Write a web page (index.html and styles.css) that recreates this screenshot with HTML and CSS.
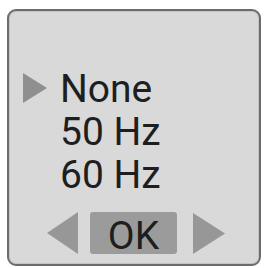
FILE: index.html
```html
<!DOCTYPE html>
<html>
<head>
    <title>Filter</title>
    <link rel="stylesheet" href="styles.css">
</head>
<body>
    <div class="panel">
        <ul class="options">
            <li class="option selected">
                <span class="marker">
                    <svg width="24" height="30" viewBox="0 0 24 30"><polygon points="0,0 24,15 0,30" /></svg>
                </span>
                <span class="label">None</span>
            </li>
            <li class="option">
                <span class="marker"></span>
                <span class="label">50 Hz</span>
            </li>
            <li class="option">
                <span class="marker"></span>
                <span class="label">60 Hz</span>
            </li>
        </ul>
        <div class="nav">
            <svg class="arrow" width="31" height="42" viewBox="0 0 31 42"><polygon points="31,0 31,42 0,21" /></svg>
            <div class="ok">OK</div>
            <svg class="arrow" width="32" height="41" viewBox="0 0 32 41"><polygon points="0,0 32,20.5 0,41" /></svg>
        </div>
    </div>
</body>
</html>
```

FILE: styles.css
```css
body
{
    margin: 0;
    background-color: white;
    font-family: Roboto, "Liberation Sans", sans-serif;
}
.panel
{
    margin-left: 7px;
    margin-top: 9px;
    width: 250px;
    height: 253px;
    border: 2px solid #6c6c6c;
    border-radius: 9px;
    background-color: #d9d9d9;
    box-shadow: inset 0 0 0 1px #c4c4c4;
}
.options
{
    list-style: none;
    margin: 0;
    padding: 57px 0 0 14px;
}
.option
{
    display: flex;
    align-items: center;
    gap: 13px;
    height: 43px;
    font-size: 39px;
    line-height: 43px;
    color: #1e1e1e;
}
.marker
{
    width: 24px;
    height: 30px;
    margin-top: -4px;
}
.marker svg
{
    display: block;
    fill: #8f8f8f;
}
.nav
{
    display: flex;
    align-items: center;
    margin-top: 15px;
    padding-left: 38px;
}
.arrow
{
    display: block;
    fill: #979797;
}
.ok
{
    box-sizing: border-box;
    width: 87px;
    height: 42px;
    padding-top: 6px;
    margin: 0 16px 0 12px;
    border-radius: 3px;
    background-color: #9b9b9b;
    color: #1e1e1e;
    font-size: 39px;
    line-height: 36px;
    text-align: center;
}
```
